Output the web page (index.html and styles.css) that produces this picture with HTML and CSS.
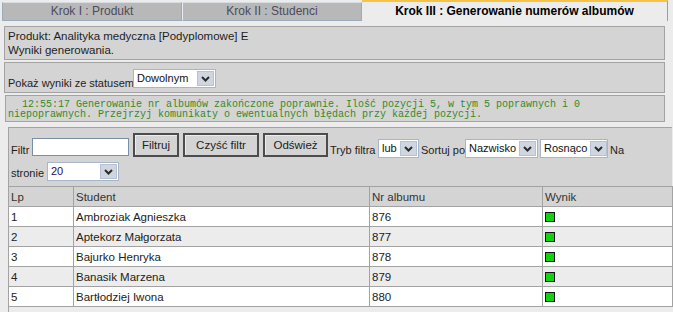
FILE: index.html
```html
<!DOCTYPE html>
<html lang="pl">
<head>
<meta charset="utf-8">
<title>Krok III : Generowanie numerów albumów</title>
<link rel="stylesheet" href="styles.css">
</head>
<body>
<div class="tabs">
  <div class="tab tab-1">Krok I : Produkt</div>
  <div class="tab tab-2">Krok II : Studenci</div>
  <div class="tab tab-active">Krok III : Generowanie numerów albumów</div>
</div>

<div class="panel info">
  <div>Produkt: Analityka medyczna [Podyplomowe] E</div>
  <div>Wyniki generowania.</div>
</div>

<div class="panel status">
  <span class="label l-status">Pokaż wyniki ze statusem</span>
  <span class="sel w-status"><span class="sel-text">Dowolnym</span><span class="sel-btn"><svg width="9" height="6" viewBox="0 0 9 6"><path d="M1 1 L4.5 4.5 L8 1" fill="none" stroke="#2b2b2b" stroke-width="2"/></svg></span></span>
</div>

<div class="panel msg">
  <div class="msg-text">12:55:17 Generowanie nr albumów zakończone poprawnie. Ilość pozycji 5, w tym 5 poprawnych i 0 niepoprawnych. Przejrzyj komunikaty o ewentualnych błędach przy każdej pozycji.</div>
</div>

<div class="panel grid">
  <div class="frow row1">
    <span class="label l-filtr">Filtr</span>
    <span class="input"></span>
    <span class="btn b-filtruj">Filtruj</span>
    <span class="btn b-czysc">Czyść filtr</span>
    <span class="btn b-odswiez">Odśwież</span>
    <span class="label l-tryb">Tryb filtra</span>
    <span class="sel w-lub"><span class="sel-text">lub</span><span class="sel-btn"><svg width="9" height="6" viewBox="0 0 9 6"><path d="M1 1 L4.5 4.5 L8 1" fill="none" stroke="#2b2b2b" stroke-width="2"/></svg></span></span>
    <span class="label l-sort">Sortuj po</span>
    <span class="sel w-nazw"><span class="sel-text">Nazwisko</span><span class="sel-btn"><svg width="9" height="6" viewBox="0 0 9 6"><path d="M1 1 L4.5 4.5 L8 1" fill="none" stroke="#2b2b2b" stroke-width="2"/></svg></span></span>
    <span class="sel w-ros"><span class="sel-text">Rosnąco</span><span class="sel-btn"><svg width="9" height="6" viewBox="0 0 9 6"><path d="M1 1 L4.5 4.5 L8 1" fill="none" stroke="#2b2b2b" stroke-width="2"/></svg></span></span>
    <span class="label l-na">Na</span>
  </div>
  <div class="frow row2">
    <span class="label l-stronie">stronie</span>
    <span class="sel w-20"><span class="sel-text">20</span><span class="sel-btn"><svg width="9" height="6" viewBox="0 0 9 6"><path d="M1 1 L4.5 4.5 L8 1" fill="none" stroke="#2b2b2b" stroke-width="2"/></svg></span></span>
  </div>
  <table class="results">
    <thead>
      <tr><th class="c-lp">Lp</th><th class="c-st">Student</th><th class="c-nr">Nr albumu</th><th class="c-wy">Wynik</th></tr>
    </thead>
    <tbody>
      <tr><td>1</td><td>Ambroziak Agnieszka</td><td>876</td><td><span class="ok"></span></td></tr>
      <tr><td>2</td><td>Aptekorz Małgorzata</td><td>877</td><td><span class="ok"></span></td></tr>
      <tr><td>3</td><td>Bajurko Henryka</td><td>878</td><td><span class="ok"></span></td></tr>
      <tr><td>4</td><td>Banasik Marzena</td><td>879</td><td><span class="ok"></span></td></tr>
      <tr><td>5</td><td>Bartłodziej Iwona</td><td>880</td><td><span class="ok"></span></td></tr>
    </tbody>
  </table>
  <div class="grid-foot"></div>
</div>
</body>
</html>
```

FILE: styles.css
```css
html, body {
  margin: 0;
  padding: 0;
}
body {
  background: #ececec;
  font-family: "Liberation Sans", Arial, sans-serif;
  font-size: 11px;
  color: #1e1e1e;
  width: 673px;
  height: 312px;
  overflow: hidden;
}

/* tabs */
.tabs {
  display: flex;
  align-items: flex-end;
  height: 21px;
  padding-left: 2px;
}
.tab {
  box-sizing: border-box;
  height: 19px;
  line-height: 17px;
  text-align: center;
  background: #b8b8b8;
  color: #4c4c5c;
  font-size: 12px;
  border: 1px solid #9aabbd;
  border-top-color: #d8dde2;
}
.tab-1 { width: 180px; }
.tab-2 { width: 180px; border-left-color: #e8eef4; }
.tab-active {
  width: 306px;
  height: 21px;
  line-height: 19px;
  background: #ececec;
  color: #000;
  font-weight: bold;
  border: none;
  border-top: 2px solid #f6c343;
  border-right: 1px solid #8fa2b5;
}

/* panels */
.panel {
  background: #d4d4d4;
  border: 1px solid #a3a3a3;
  box-sizing: border-box;
}
.info {
  margin: 5px 8px 0 4px;
  height: 34px;
  padding: 2px 3px;
  line-height: 14px;
  font-size: 11.5px;
}
.status {
  margin: 2px 8px 0 4px;
  height: 31px;
  padding: 5px 3px 0;
  display: flex;
  align-items: flex-end;
}
.status .sel { margin-bottom: 4px; }
.status .label { margin-bottom: 2px; }
.label {
  line-height: 13px;
  white-space: nowrap;
}
.l-status { width: 125px; }
.msg {
  margin: 2px 8px 0 5px;
  height: 27px;
  padding: 4px 3px 0 2px;
}
.msg-text {
  font-family: "Liberation Mono", "Courier New", monospace;
  font-size: 10px;
  line-height: 10px;
  color: #358a25;
  text-indent: 14px;
}

/* select look-alike */
.sel {
  display: flex;
  flex: none;
  box-sizing: border-box;
  height: 19px;
  border: 1px solid #a7b6c8;
  background: #fff;
  align-items: stretch;
}
.sel-text {
  flex: 1;
  padding: 1px 2px 0 3px;
  line-height: 15px;
  font-size: 11px;
  color: #111;
  white-space: nowrap;
}
.sel-btn {
  flex: none;
  width: 15px;
  margin: 1px;
  background: #cfd6e0;
  border: 1px solid #b6c2d2;
  display: flex;
  align-items: center;
  justify-content: center;
}
.w-status { width: 83px; }
.w-lub { width: 41px; }
.w-nazw { width: 73px; }
.w-ros { width: 68px; margin-left: 2px; }
.w-20 { width: 72px; }
.w-20 .sel-text { color: #2a0a5a; }

/* filter rows */
.grid {
  margin: 5px 1px 0 8px;
  height: 200px;
  border-right: none;
}
.frow {
  display: flex;
  align-items: flex-end;
  padding-left: 2px;
}
.frow .label { margin-bottom: 1px; }
.row1 { padding-top: 5px; }
.row2 { padding-top: 4px; padding-bottom: 5px; }
.l-filtr { width: 21px; }
.l-tryb { width: 48px; margin-left: 2px; }
.l-sort { width: 44px; margin-left: 2px; }
.l-na { margin-left: 2px; }
.l-stronie { width: 36px; }
.input {
  box-sizing: border-box;
  width: 97px;
  height: 18px;
  border: 1px solid #7a8ea4;
  background: #fff;
  margin-bottom: 2px;
}
.btn {
  box-sizing: border-box;
  height: 24px;
  line-height: 20px;
  border: 2px solid #4c4c4c;
  background: #d4d4d4;
  text-align: center;
  font-size: 11.5px;
  color: #222;
  margin-left: 4px;
  margin-bottom: 1px;
  box-shadow: inset 1px 1px 0 #ededed;
}
.b-filtruj { width: 46px; }
.b-czysc { width: 76px; }
.b-odswiez { width: 65px; }

/* table */
.results {
  width: 664px;
  border-collapse: collapse;
  font-size: 11.5px;
}
.results th, .results td {
  border: 1px solid #a3a3a3;
  height: 19px;
  padding: 0 2px;
  text-align: left;
  font-weight: normal;
  color: #222;
}
.results th:first-child, .results td:first-child { border-left: none; }
.results th { background: #d4d4d4; color: #333; }
.results tbody tr:nth-child(odd) td { background: #fff; }
.results tbody tr:nth-child(even) td { background: #ececec; }
.c-lp { width: 60px; }
.c-st { width: 291px; }
.c-nr { width: 168px; }
.ok {
  display: inline-block;
  width: 8px;
  height: 8px;
  background: #11d411;
  border: 1px solid #111;
  vertical-align: -1px;
}
.grid-foot {
  height: 10px;
  background: #ececec;
}
```
